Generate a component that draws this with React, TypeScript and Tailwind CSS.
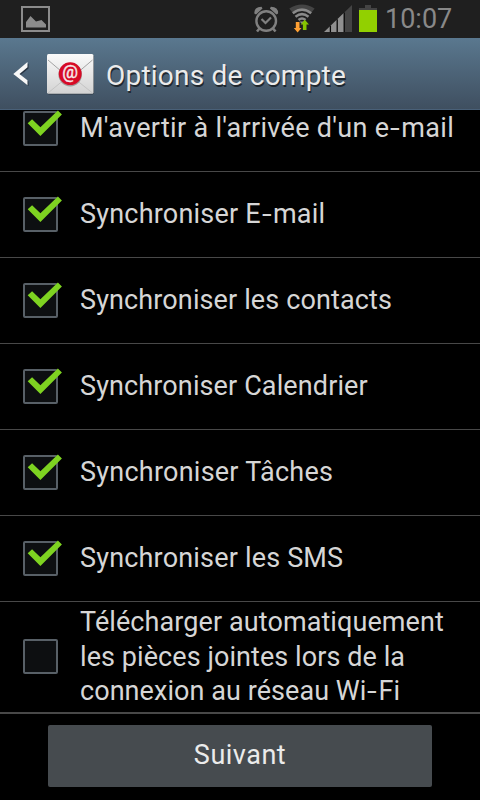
const rows = [
  { label: "M'avertir à l'arrivée d'un e-mail", spacing: 'tracking-[0.3px]' },
  { label: 'Synchroniser E-mail', spacing: 'tracking-[0.21px]' },
  { label: 'Synchroniser les contacts', spacing: 'tracking-[0.12px]' },
  { label: 'Synchroniser Calendrier', spacing: 'tracking-[0.12px]' },
  { label: 'Synchroniser Tâches', spacing: 'tracking-[0.24px]' },
  { label: 'Synchroniser les SMS', spacing: 'tracking-[0.18px]' },
];

// Labels use a wide hyphen, so each one gets its own stretched box.
function Label({ text }: { text: string }) {
  const parts = text.split('-');
  return (
    <>
      {parts.map((part, i) => (
        <span key={part}>
          {i > 0 && <span className="inline-block w-[12px] scale-x-130 text-center">-</span>}
          {part}
        </span>
      ))}
    </>
  );
}

function Checkbox({ checked }: { checked: boolean }) {
  return (
    <span className="relative ml-[23px] block h-[35px] w-[35px] shrink-0 rounded-[2px] border-2 border-[#586067] bg-[#0d0f11]">
      {checked && (
        <svg className="absolute -left-[2px] -top-[2px] max-w-none overflow-visible" width="40" height="35" viewBox="0 0 40 35">
          <path d="M4.7 12.2 9.1 8.2 17.4 16.2 34.9 -0.6 38.9 3.4 17.4 25.1Z" fill="#7ed321" />
        </svg>
      )}
    </span>
  );
}

function StatusBar() {
  return (
    <div className="flex h-[38px] shrink-0 items-start bg-[#1f1f1f]">
      <svg className="ml-[21px] mt-[6px] shrink-0" width="29" height="26" viewBox="0 0 29 26">
        <rect x="1" y="1" width="27" height="24" fill="none" stroke="#8c8c8c" strokeWidth="2" />
        <path d="M5 21.5V16L9.5 10 15 15.5 20.5 14 25 18.5V21.5Z" fill="#8c8c8c" />
      </svg>
      <svg className="ml-[204px] mt-[6px] shrink-0" width="26" height="27" viewBox="0 0 26 27" fill="none" stroke="#808080">
        <circle cx="12.2" cy="15" r="9.8" strokeWidth="2.4" />
        <path d="M7.5 13 11.5 17 17 11.5" strokeWidth="2.2" />
        <path d="M5.5 22.5 3 25.5M19 22.5 21.5 25.5" strokeWidth="2.6" />
        <path d="M0.3 7.5Q0 1 7.5 0.8L8.5 2.5 2 8.5ZM24.1 7.5Q24.4 1 16.9 0.8L15.9 2.5 22.4 8.5Z" fill="#808080" stroke="none" />
      </svg>
      <svg className="ml-[9px] mt-[4px] shrink-0" width="29" height="29" viewBox="0 0 29 29">
        <path d="M0.3 4.5Q13-3.5 25.6 4.5L22.7 8.2Q13 0.5 3.2 8.2Z" fill="#444" />
        <g fill="none" stroke="#8a8a8a" strokeWidth="2.5">
          <path d="M3.8 9.3Q13 2 22.2 9.3" />
          <path d="M6.5 12.7Q13 7.6 19.5 12.7" />
          <path d="M9.5 16Q13 13 16.5 16" />
        </g>
        <path d="M10.5 17.5H15.5L13 20Z" fill="#8a8a8a" />
        <path d="M6.8 18H10.5V24H12.5L8.6 28.5 4.8 24H6.8Z" fill="#ffa033" />
        <path d="M13.9 26H17.5V20.5H20L15.8 15.8 11.7 20.5H13.9Z" fill="#86c400" />
      </svg>
      <svg className="ml-[6px] mt-[5px] shrink-0" width="28" height="27" viewBox="0 0 28 27">
        <path d="M0 27 20.5 7.2V27Z" fill="#909090" />
        <path d="M20.5 7.2 28 0V27H20.5Z" fill="#444" />
        <path d="M6.4 20.8V27M13.2 14.2V27M20.2 7.5V27" stroke="#080808" strokeWidth="1.3" />
      </svg>
      <svg className="ml-[7px] mt-[5px] shrink-0" width="18" height="27" viewBox="0 0 18 27">
        <path d="M0 3H6V0H12V3H18V5H0Z" fill="#444" />
        <path d="M0 5H18V27H0Z" fill="#92d000" />
      </svg>
      <span className="ml-[8px] mt-[3px] whitespace-nowrap text-[27px] leading-[32px] text-[#898989]">10:07</span>
    </div>
  );
}

function MailIcon() {
  return (
    <svg className="ml-[17px] mt-[15px] shrink-0" width="48" height="42" viewBox="0 0 48 42">
      <defs>
        <linearGradient id="paper" x1="0" y1="0" x2="0" y2="1">
          <stop offset="0" stopColor="#fafafa" />
          <stop offset="1" stopColor="#d3d3d3" />
        </linearGradient>
      </defs>
      <rect x="0.3" y="1.5" width="46.7" height="40" rx="1.8" fill="#303b45" />
      <rect x="0" y="1" width="46.5" height="39.7" rx="1.5" fill="url(#paper)" />
      <path d="M1 40 18 26M45.5 40 28 26" stroke="#c4c4c4" />
      <path d="M1 7 21 24Q23 25.5 25.5 24L45.5 7" fill="none" stroke="#a4a4a4" />
      <circle cx="23.2" cy="21.6" r="11.8" fill="#a09a9a" />
      <circle cx="23.2" cy="20.7" r="11.4" fill="#d70a26" />
      <text x="23.2" y="25.2" textAnchor="middle" fontSize="17.5" fill="#f5e9eb" stroke="#f5e9eb" strokeWidth="0.4">@</text>
    </svg>
  );
}

export default function App() {
  return (
    <div className="flex h-[800px] w-[480px] flex-col overflow-hidden bg-black font-[Roboto,sans-serif] text-[#d6d6d6]">
      <StatusBar />
      <header className="flex h-[72px] shrink-0 items-start border-b border-[#496078] bg-linear-to-b from-[#5a788f] to-[#3f4f60]">
        <svg className="ml-[13px] mt-[24px] shrink-0" width="17" height="24" viewBox="0 0 17 24">
          <path d="M15.5 1.5V6.5L7.5 13 15.5 19.5V24L1.5 13Z" fill="#263341" />
          <path d="M14.5 0V5.3L6.5 12 14.5 18.2V23.2L0.3 12Z" fill="#f8f8f8" />
        </svg>
        <MailIcon />
        <h1 className="ml-[11px] mt-[21px] whitespace-nowrap text-[28px] leading-[34px] font-normal tracking-[0.22px] text-[#ebebeb] [text-shadow:1px_2px_0_#202830]">Options de compte</h1>
      </header>
      <main className="h-[602px] shrink-0 overflow-hidden">
        <ul className="-mt-[24px]">
          {rows.map((row) => (
            <li key={row.label} className="flex h-[86px] items-center border-b border-[#484848]">
              <Checkbox checked />
              <span className={`mb-[2px] ml-[22px] whitespace-nowrap text-[27px] leading-[34px] ${row.spacing}`}>
                <Label text={row.label} />
              </span>
            </li>
          ))}
          <li className="flex h-[109px] items-center">
            <Checkbox checked={false} />
            <span className="ml-[22px] flex flex-col whitespace-nowrap pt-px text-[27px] leading-[34.5px]">
              <span className="tracking-[0.09px]">Télécharger automatiquement</span>
              <span className="tracking-[0.07px]">les pièces jointes lors de la</span>
              <span className="tracking-[0.06px]">
                <Label text="connexion au réseau Wi-Fi" />
              </span>
            </span>
          </li>
        </ul>
      </main>
      <footer className="flex h-[88px] shrink-0 justify-center border-t-2 border-[#484848] pt-[11px]">
        <button className="h-[62px] w-[384px] rounded-[2px] bg-[#464b4f] pb-[2px] text-[27px] tracking-[0.5px] text-[#ebebeb]">Suivant</button>
      </footer>
    </div>
  );
}
